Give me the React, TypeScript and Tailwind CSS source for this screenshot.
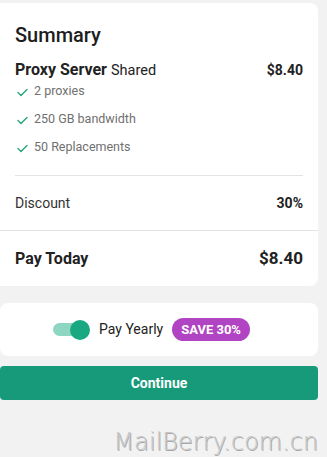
import { useState } from "react";

function Check() {
    return (
        <svg width="11" height="9" viewBox="0 0 11 9" fill="none" className="shrink-0 mt-[2px]">
            <path d="M1 4.6 L4 7.6 L10 1.4" stroke="#2aa67f" strokeWidth="1.4" strokeLinecap="round" strokeLinejoin="round" />
        </svg>
    )
}

export default function App() {
    const [yearly, setYearly] = useState<boolean>(true);
    const features = ["2 proxies", "250 GB bandwidth", "50 Replacements"];

    return (
        <div className="w-[327px] h-[457px] bg-[#f2f2f2] pt-[3px] pr-[9px] overflow-hidden text-[#222]" style={{ fontFamily: "Roboto, 'Liberation Sans', sans-serif" }}>
            {/* summary card */}
            <div className="bg-white rounded-r-lg h-[283px] flex flex-col">
                <div className="px-[15px] pt-[19px]">
                    <h1 className="text-[20px] leading-[26px] font-medium text-[#1d1d1d]">Summary</h1>
                    <div className="flex justify-between items-center mt-[12px] h-[20px]">
                        <div className="flex items-baseline gap-[4px]">
                            <span className="text-[16px] font-bold">Proxy Server</span>
                            <span className="text-[14.5px]">Shared</span>
                        </div>
                        <span className="text-[14px] font-bold">$8.40</span>
                    </div>
                    <ul className="flex flex-col mt-[-3px]">
                        {features.map((f) => (
                            <li key={f} className="flex items-center gap-[6px] h-[28px] pl-[2px] text-[12.5px] text-[#707070]">
                                <Check />
                                <span>{f}</span>
                            </li>
                        ))}
                    </ul>
                    <div className="border-t border-[#e3e3e3] mt-[14px]"></div>
                    <div className="flex justify-between items-center h-[54px] text-[14px] text-[#333]">
                        <span>Discount</span>
                        <span className="font-bold text-[#222]">30%</span>
                    </div>
                </div>
                <div className="border-t border-[#e3e3e3]"></div>
                <div className="flex-1 flex justify-between items-center px-[15px]">
                    <span className="text-[16px] font-bold">Pay Today</span>
                    <span className="text-[17px] font-bold">$8.40</span>
                </div>
            </div>

            {/* yearly toggle */}
            <div className="bg-white rounded-lg mt-[17px] h-[53px] flex items-center justify-center gap-[9px] pr-[15px]">
                <button onClick={() => setYearly(!yearly)} className="relative w-[37px] h-[20px] flex items-center">
                    <span className={yearly ? "w-[32px] h-[13px] rounded-full bg-[#8fd6c2]" : "w-[32px] h-[13px] rounded-full bg-[#cfcfcf]"}></span>
                    <span className={yearly ? "absolute right-0 w-[20px] h-[20px] rounded-full bg-[#1aa882]" : "absolute left-0 w-[20px] h-[20px] rounded-full bg-white shadow"}></span>
                </button>
                <span className="text-[14px] text-[#222]">Pay Yearly</span>
                <span className="bg-[#b044c2] text-white text-[13px] font-bold rounded-full px-[9px] h-[23px] flex items-center">SAVE 30%</span>
            </div>

            {/* continue */}
            <button className="mt-[10px] w-full h-[34px] bg-[#169a7a] rounded-[4px] text-white text-[14px] font-bold">Continue</button>

            <div className="flex justify-end mt-[24px]">
                <span className="text-[24px] font-light text-[#c9c9c9]" style={{ fontFamily: "'DejaVu Sans', sans-serif", textShadow: "1px 1px 0 #a8a8a8" }}>MailBerry.com.cn</span>
            </div>
        </div>
    )
}
